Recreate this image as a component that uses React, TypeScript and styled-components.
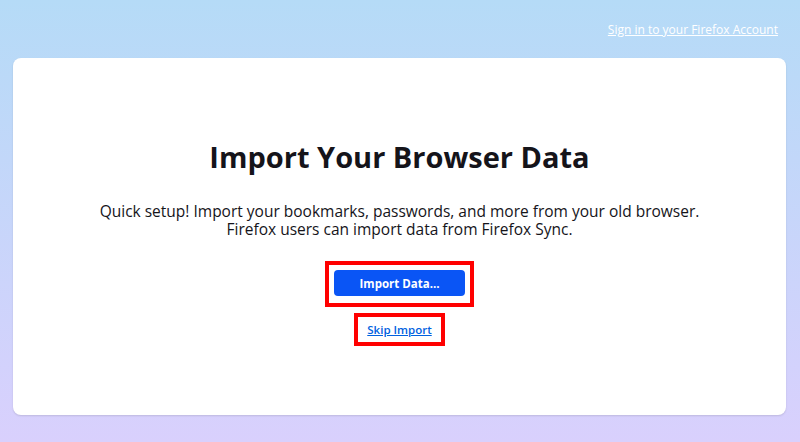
import React from "react";
import styled, { createGlobalStyle } from "styled-components";

const Global = createGlobalStyle`
  html, body { margin: 0; padding: 0; }
  body {
    font-family: "Open Sans", "Noto Sans", sans-serif;
    background: linear-gradient(180deg, #b5dbf7 0%, #d9d0fd 100%);
    min-height: 442px;
  }
`;

const Page = styled.div`
  height: 442px;
  box-sizing: border-box;
  display: flex;
  flex-direction: column;
  padding: 0 14px 27px 13px;
`;

const TopBar = styled.div`
  height: 58px;
  display: flex;
  justify-content: flex-end;
  align-items: flex-start;
  padding-top: 21px;
  box-sizing: border-box;
`;

const TopLink = styled.a`
  color: #ffffff;
  font-size: 12px;
  text-decoration: underline;
  margin-right: 8px;
  cursor: pointer;
`;

const Card = styled.main`
  flex: 1;
  background: #ffffff;
  border-radius: 8px;
  box-shadow: 0 1px 2px rgba(0, 0, 0, 0.12);
  display: flex;
  flex-direction: column;
  align-items: center;
  padding-top: 82px;
  box-sizing: border-box;
`;

const Title = styled.h1`
  margin: 0;
  font-size: 29px;
  font-weight: 700;
  color: #15141a;
  line-height: 34px;
`;

const Desc = styled.p`
  margin: 28px 0 0;
  font-size: 15.5px;
  line-height: 18px;
  color: #15141a;
  text-align: center;
`;

const Highlight = styled.div<{ $pad: string }>`
  border: 4px solid #ff0000;
  padding: ${(p) => p.$pad};
  display: flex;
`;

const PrimaryButton = styled.button`
  background: #0a55f5;
  color: #ffffff;
  border: none;
  border-radius: 4px;
  width: 131px;
  height: 26px;
  font-family: inherit;
  font-size: 11.5px;
  font-weight: 700;
  cursor: pointer;
`;

const ButtonBox = styled.div`
  margin-top: 23px;
`;

const SkipBox = styled.div`
  margin-top: 6px;
`;

const SkipLink = styled.a`
  color: #0061e0;
  font-size: 11.5px;
  font-weight: 600;
  text-decoration: underline;
  padding: 0 4px;
  line-height: 25px;
  cursor: pointer;
`;

export default function App() {
  return (
    <>
      <Global />
      <Page>
        <TopBar>
          <TopLink>Sign in to your Firefox Account</TopLink>
        </TopBar>
        <Card>
          <Title>Import Your Browser Data</Title>
          <Desc>
            Quick setup! Import your bookmarks, passwords, and more from your old browser.
            <br />
            Firefox users can import data from Firefox Sync.
          </Desc>
          <ButtonBox>
            <Highlight $pad="5px 5px 7px">
              <PrimaryButton>Import Data…</PrimaryButton>
            </Highlight>
          </ButtonBox>
          <SkipBox>
            <Highlight $pad="0 5px">
              <SkipLink>Skip Import</SkipLink>
            </Highlight>
          </SkipBox>
        </Card>
      </Page>
    </>
  );
}
